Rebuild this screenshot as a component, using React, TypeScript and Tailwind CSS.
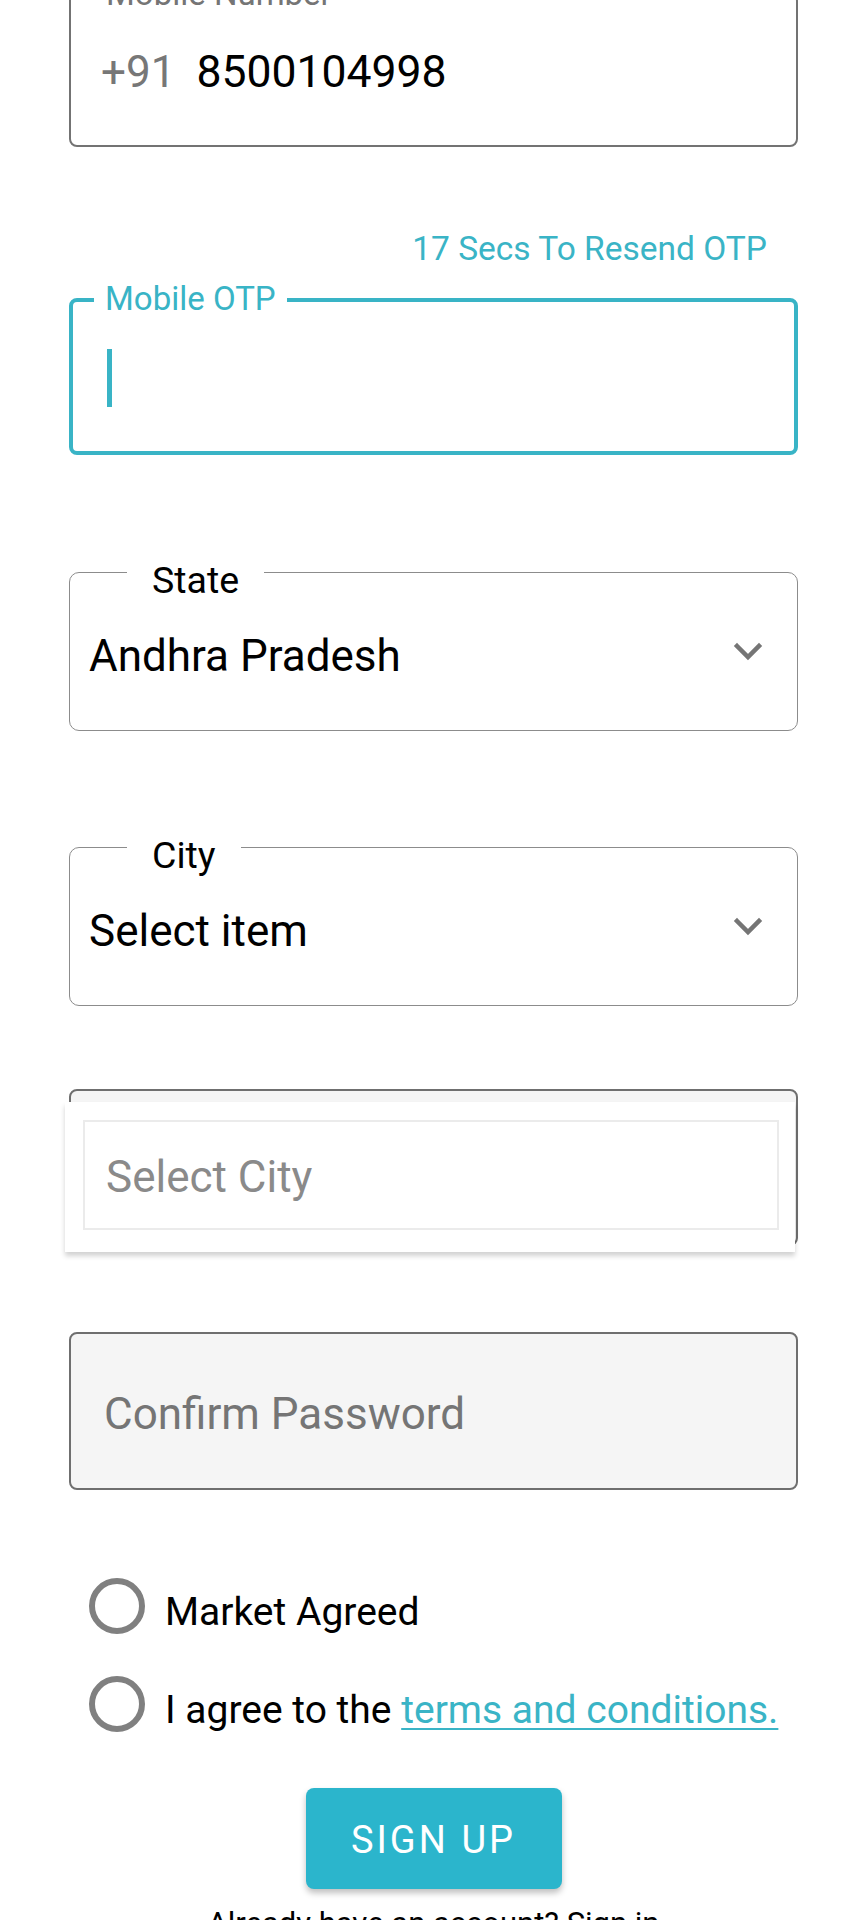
import React from 'react';

const font = "font-['Roboto','Liberation_Sans',sans-serif]";

const Chevron = () => (
  <svg width="30" height="20" viewBox="0 0 30 20" className="shrink-0">
    <polyline points="4,4 15,15 26,4" fill="none" stroke="#757575" strokeWidth="4.5" strokeLinecap="square" />
  </svg>
);

// outlined select with a label sitting on the top border
const SelectField = ({ label, value }: { label: string; value: string }) => (
  <div className="relative h-[159px] rounded-[10px] border border-[#8c8c8c] flex items-center justify-between pl-[19px] pr-[34px]">
    <span className="absolute left-[57px] top-[-11px] bg-white px-[25px] text-[37.5px] leading-[37px] text-black">{label}</span>
    <div className="pt-[8px] text-[44px] leading-[44px] text-black">{value}</div>
    <Chevron />
  </div>
);

const Radio = ({ children }: { children: React.ReactNode }) => (
  <div className="flex items-center gap-[20px] pl-[20px] h-[56px]">
    <div className="w-[56px] h-[56px] rounded-full border-[6px] border-[#808080] shrink-0" />
    <div className="pt-[12px] text-[39px] leading-[39px] text-black whitespace-nowrap">{children}</div>
  </div>
);

export default function App() {
  return (
    <div className={`h-[1920px] overflow-hidden bg-white ${font}`}>
      <div className="ml-[69px] w-[729px] flex flex-col">
        {/* Mobile number */}
        <div className="relative -mt-[7px] h-[154px] rounded-[8px] border-2 border-[#737373] flex items-center pl-[30px] pt-[4px]">
          <span className="absolute left-[23px] top-[-17px] bg-white px-[12px] text-[33px] leading-[32px] text-[#757575]">Mobile Number</span>
          <span className="text-[44px] leading-[44px] text-[#777777]">+91</span>
          <span className="ml-[21px] text-[44.5px] leading-[44px] text-black">8500104998</span>
        </div>

        <div className="mt-[82px] h-[40px] text-right pr-[31px] text-[33.5px] leading-[40px] text-[#3ab4c6]">17 Secs To Resend OTP</div>

        {/* OTP (focused) */}
        <div className="relative mt-[29px] h-[157px] rounded-[8px] border-4 border-[#39b4c6] flex items-center pl-[34px] pt-[3px]">
          <span className="absolute left-[21px] top-[-19px] bg-white px-[11px] text-[33px] leading-[32px] text-[#39b4c6]">Mobile OTP</span>
          <div className="w-[5px] h-[58px] bg-[#39b4c6]" />
        </div>

        <div className="mt-[117px]">
          <SelectField label="State" value="Andhra Pradesh" />
        </div>
        <div className="mt-[116px]">
          <SelectField label="City" value="Select item" />
        </div>

        {/* Password, covered by the open city dropdown */}
        <div className="relative mt-[83px] h-[157px] rounded-[8px] border-2 border-[#6f6f6f] bg-[#f5f5f5]">
          <div className="absolute left-[-6px] top-[11px] w-[730px] h-[150px] bg-white shadow-[0_4px_5px_rgba(0,0,0,0.18)] pt-[18px] pl-[18px] pr-[16px] pb-[22px]">
            <div className="h-full border-2 border-[#ebebeb] flex items-center pl-[21px] pt-[4px]">
              <span className="text-[44px] leading-[44px] text-[#8a8a8a]">Select City</span>
            </div>
          </div>
        </div>

        {/* Confirm password */}
        <div className="mt-[86px] h-[158px] rounded-[8px] border-2 border-[#6f6f6f] bg-[#f5f5f5] flex items-center pl-[33px] pt-[6px]">
          <span className="text-[44px] leading-[44px] text-[#757575]">Confirm Password</span>
        </div>

        <div className="mt-[88px]">
          <Radio>Market Agreed</Radio>
        </div>
        <div className="mt-[42px]">
          <Radio>
            I agree to the{' '}
            <span className="text-[#3ab4c6] underline underline-offset-[5px] decoration-[2px]">terms and conditions.</span>
          </Radio>
        </div>

        <button className="mt-[56px] mx-auto w-[256px] h-[101px] rounded-[8px] bg-[#2bb5cc] shadow-[0_4px_6px_rgba(0,0,0,0.25)] text-white text-[38px] leading-[38px] tracking-[0.08em] pt-[2px]">
          SIGN UP
        </button>

        <div className="mt-[15px] text-center text-[31px] leading-[40px] text-black whitespace-nowrap">Already have an account? Sign in</div>
      </div>
    </div>
  );
}
